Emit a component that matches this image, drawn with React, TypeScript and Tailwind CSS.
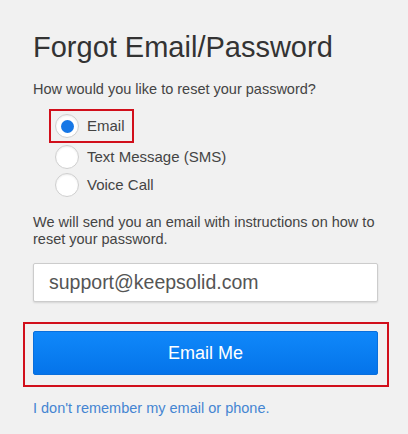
import React, { useState } from "react";

const options = [
  { id: "email", label: "Email" },
  { id: "sms", label: "Text Message (SMS)" },
  { id: "voice", label: "Voice Call" },
];

const Radio = ({ checked }: { checked: boolean }) => (
  <span className="flex h-[24px] w-[24px] shrink-0 items-center justify-center rounded-full border border-[#cfcfcf] bg-white shadow-[inset_0_1px_2px_rgba(0,0,0,0.08)]">
    {checked && <span className="h-[13px] w-[13px] rounded-full bg-[#1677e6]" />}
  </span>
);

const App = () => {
  const [method, setMethod] = useState("email");
  const [email, setEmail] = useState("support@keepsolid.com");

  return (
    <div className="min-h-[434px] w-full bg-[#f1f1f1] px-[33px] pt-[33px] font-['Liberation_Sans',Arial,sans-serif]">
      <h1 className="text-[29px] leading-[28px] text-[#333333]">
        Forgot Email/Password
      </h1>
      <p className="mt-[19px] text-[14.5px] leading-[18px] text-[#444444]">
        How would you like to reset your password?
      </p>

      <div className="mt-[11px] flex flex-col">
        {options.map((opt) => {
          const checked = method === opt.id;
          if (opt.id === "email") {
            return (
              <div
                key={opt.id}
                className="ml-[16px] flex h-[34px] w-[85px] items-center gap-[8px] border-2 border-[#d10f1b] pl-[4px]"
                onClick={() => setMethod(opt.id)}
              >
                <Radio checked={checked} />
                <span className="text-[15px] text-[#444444]">{opt.label}</span>
              </div>
            );
          }
          return (
            <div
              key={opt.id}
              className="ml-[22px] flex h-[28px] items-center gap-[8px]"
              onClick={() => setMethod(opt.id)}
            >
              <Radio checked={checked} />
              <span className="text-[15px] text-[#444444]">{opt.label}</span>
            </div>
          );
        })}
      </div>

      <p className="mt-[15px] text-[14.5px] leading-[17px] text-[#444444]">
        We will send you an email with instructions on how to reset your
        password.
      </p>

      <input
        type="text"
        value={email}
        onChange={(e) => setEmail(e.target.value)}
        className="mt-[15px] block h-[39px] w-[345px] rounded-[2px] border border-[#cccccc] bg-white pl-[15px] text-[19.5px] text-[#555555] shadow-[0_1px_2px_rgba(0,0,0,0.12)] outline-none"
      />

      <div className="-ml-[10px] mt-[20px] w-[366px] border-2 border-[#d10f1b] pb-[10px] pl-[8px] pr-[9px] pt-[7px]">
        <button
          type="button"
          className="flex h-[44px] w-[345px] items-center justify-center rounded-[2px] border border-[#0a6fdc] bg-gradient-to-b from-[#1088fa] to-[#0574ea] text-[18px] text-white"
        >
          Email Me
        </button>
      </div>

      <a
        href="#"
        className="mt-[13px] block text-[14.5px] leading-[17px] text-[#4585d2]"
      >
        I don't remember my email or phone.
      </a>
    </div>
  );
};

export default App;
